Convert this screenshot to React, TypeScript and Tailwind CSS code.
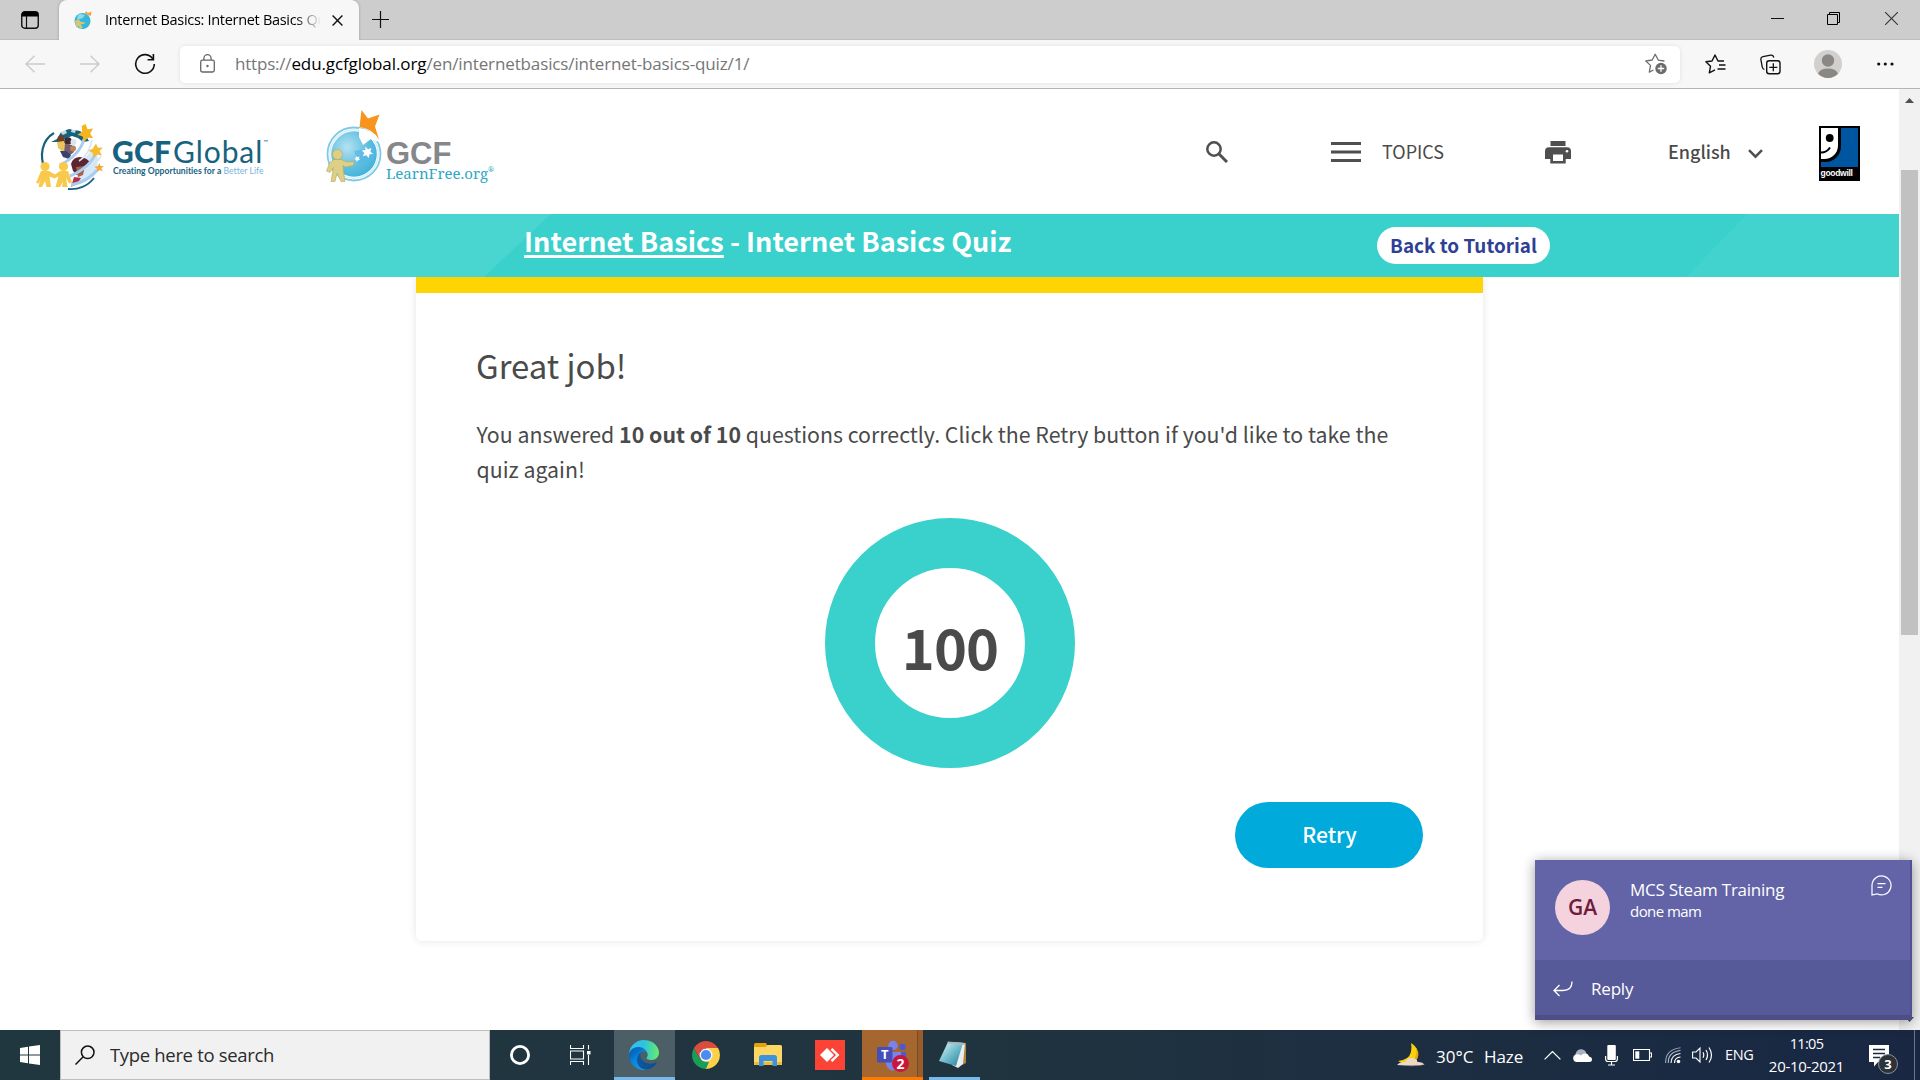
import type { ReactNode } from 'react';

const UI = "font-['Open_Sans','Noto_Sans',sans-serif]";
const PAGE = "font-['Noto_Sans_CJK_SC','Noto_Sans',sans-serif]";

function Icon({ w, h, className = '', children }: { w: number; h: number; className?: string; children: ReactNode }) {
  return (
    <svg width={w} height={h} viewBox={`0 0 ${w} ${h}`} fill="none" className={`block shrink-0 ${className}`}>
      {children}
    </svg>
  );
}

function TitleBar() {
  return (
    <div className="flex h-10 shrink-0 items-start border-b border-[#bdbdbd] bg-[#cdcdcd]">
      <Icon w={18} h={18} className="mt-[11px] ml-[21px]">
        <rect x="0.75" y="0.75" width="16.5" height="16.5" rx="3" stroke="#111" strokeWidth="1.4" />
        <path d="M0.8 5.5V3.5A2.7 2.7 0 0 1 3.5.8h11a2.7 2.7 0 0 1 2.7 2.7v2z" fill="#000" />
        <path d="M5.5 5v12" stroke="#111" strokeWidth="1.2" />
      </Icon>
      <div className="ml-[20px] flex h-10 w-[300px] shrink-0 items-start rounded-t-lg bg-[#f7f7f7] shadow-[0_0_3px_rgba(0,0,0,0.25)] [clip-path:inset(-3px_-3px_0px_-3px)]">
        <Icon w={20} h={20} className="mt-[10px] ml-[14px]">
          <circle cx="9.500" cy="11" r="8" fill="#38b7d8" />
          <path d="M5 4.800q4-2 7 .8l-3 3-5 1z" fill="#8ed9ea" />
          <path d="M12 3.500 13 1l2 2 3.500-1.400-.8 4.400z" fill="#f7a03c" />
          <path d="m2 11 4-2 1 2.500 5 1-1 1.800-3-.5L9.500 18 7 18.500 5.500 16 3 17.500z" fill="#d3c77a" />
        </Icon>
        <div className={`${UI} ml-[12px] h-[39px] w-[216px] overflow-hidden text-[14.5px] leading-[39px] tracking-[-0.3px] whitespace-nowrap text-black [mask-image:linear-gradient(to_right,#000_88%,transparent_100%)]`}>
          Internet Basics: Internet Basics Quiz
        </div>
        <Icon w={11} h={11} className="mt-[15px] ml-[11px]">
          <path d="m.6.6 9.800 9.800M10.400.6.6 10.400" stroke="#111" strokeWidth="1.400" />
        </Icon>
      </div>
      <Icon w={17} h={17} className="mt-[11px] ml-[13px]">
        <path d="M8.500 0v17M0 8.500h17" stroke="#111" strokeWidth="1.200" />
      </Icon>
      <div className="mt-3 mr-[22px] ml-auto flex">
        <Icon w={13} h={13}>
          <path d="M0 6.500h13" stroke="#111" />
        </Icon>
        <Icon w={13} h={13} className="ml-[43px]">
          <path d="M.5 2.500h10v10H.5zM2.500 2.500v-2h10v10h-2" stroke="#000" />
        </Icon>
        <Icon w={13} h={13} className="ml-[45px]">
          <path d="m0 0 13 13M13 0 0 13" stroke="#333" strokeWidth="1.100" />
        </Icon>
      </div>
    </div>
  );
}

function Toolbar() {
  return (
    <div className="flex h-[49px] shrink-0 items-center border-b border-[#b5b5b5] bg-[#f7f7f7]">
      <Icon w={20} h={18} className="ml-[25px]">
        <path d="M20 9H1M9.500.8 1 9l8.500 8.200" stroke="#cbcbcb" strokeWidth="1.400" />
      </Icon>
      <Icon w={20} h={18} className="ml-[35px]">
        <path d="M0 9h19M10.500.8 19 9l-8.500 8.200" stroke="#cbcbcb" strokeWidth="1.400" />
      </Icon>
      <Icon w={22} h={22} className="ml-[34px]">
        <path d="M19 6.200A9.300 9.300 0 1 0 20.300 11" stroke="#111" strokeWidth="1.600" />
        <path d="M19.400 1v5.800h-5.800" stroke="#111" strokeWidth="1.600" />
      </Icon>
      <div className="ml-[24px] flex h-[37px] w-[1500px] shrink-0 items-center rounded-[5px] bg-white shadow-[0_0_4px_rgba(0,0,0,0.1)]">
        <Icon w={15} h={19} className="mb-[2px] ml-5">
          <rect x=".7" y="6.200" width="13.600" height="11.800" rx="1.800" stroke="#666" strokeWidth="1.300" />
          <path d="M3.900 6V4.200a3.600 3.600 0 0 1 7.200 0V6" stroke="#666" strokeWidth="1.300" />
          <circle cx="7.500" cy="12" r="1.200" fill="#666" />
        </Icon>
        <div className={`${UI} mb-[2px] ml-[20px] text-[17px] leading-[35px] whitespace-nowrap text-[#767676]`}>
          <span className="tracking-[-0.2px]">https://</span>
          <span className="tracking-[-0.1px] text-black">edu.gcfglobal.org</span>
          <span className="tracking-[-0.13px]">/en/internetbasics/internet-basics-quiz/1/</span>
        </div>
        <Icon w={23} h={22} className="mr-[12px] ml-auto">
          <path d="M19.500 8.300 19 8l-5.600-.8L10.200 1.200 7.200 7 .8 8l4.700 4.400-1.200 6.800L8.500 17" stroke="#6e6e6e" strokeWidth="1.300" strokeLinejoin="round" />
          <circle cx="16" cy="15.500" r="5.700" fill="#6b6b6b" />
          <path d="M16 12.300v6.400M12.800 15.500h6.400" stroke="#fff" strokeWidth="1.300" />
        </Icon>
      </div>
      <Icon w={21} h={21} className="ml-[25px]">
        <path d="M19 7h-6L10 1 7 7 .9 7.700l4.600 4.600L4.300 18.900l5.700-3" stroke="#111" strokeWidth="1.400" strokeLinejoin="round" />
        <path d="M14 11h6.500M12.500 15h8" stroke="#111" strokeWidth="1.300" />
      </Icon>
      <Icon w={21} h={21} className="ml-[34px]">
        <path d="M4.400 15.500C3 15 2.500 14 2.200 12.800L.9 5.700C.6 4 1.500 2.900 3 2.600l7.600-1.400c1.500-.3 2.800.4 3.200 2.300" stroke="#111" strokeWidth="1.300" />
        <rect x="6.700" y="6.700" width="13.300" height="13" rx="2.500" stroke="#111" strokeWidth="1.400" />
        <path d="M13.300 9.300v8M9.300 13.300h8" stroke="#111" strokeWidth="1.300" />
      </Icon>
      <Icon w={28} h={28} className="ml-[33px]">
        <circle cx="14" cy="14" r="14" fill="#d2d0ce" />
        <circle cx="14" cy="10.500" r="6.200" fill="#8a8784" />
        <path d="M4 23.800a10.300 7 0 0 1 20 0A14 14 0 0 1 4 23.800z" fill="#8a8784" />
      </Icon>
      <Icon w={17} h={4} className="ml-[35px]">
        <circle cx="1.700" cy="2" r="1.600" fill="#111" />
        <circle cx="8.300" cy="2" r="1.600" fill="#111" />
        <circle cx="15" cy="2" r="1.600" fill="#111" />
      </Icon>
    </div>
  );
}

function GlobalLogo() {
  return (
    <div className="flex h-full w-[232px] shrink-0 pl-9">
      <Icon w={68} h={66} className="mt-[36px] [overflow:visible]">
        <path d="M18 8C6 15 3 30 9 45" stroke="#17627f" strokeWidth="2.200" />
        <path d="M32 64c10 1 20-3 26-11" stroke="#17627f" strokeWidth="1.800" />
        <path d="m15 17 6-3 4-7 8-3 11 2 6 5 3 5-6 1-5-4-6-2-8 3-5 3z" fill="#17627f" />
        <path d="m24 7 5-3 2 4-4 2zM36 3l4 1-1 4-4-1z" fill="#fff" opacity=".75" />
        <path d="M58 22q9 16-3 30l-9 5-10 3q10-14 12-26z" fill="#9cc5ea" opacity=".4" />
        <circle cx="25" cy="14" r="3.500" fill="#6f3d22" />
        <path d="m21 17 7-1 3 7-4 4-5-4z" fill="#e9c35c" />
        <circle cx="32" cy="16" r="3.800" fill="#3a2a32" />
        <path d="m29 19 7 1 2 7-5 4-5-3z" fill="#745d6f" />
        <circle cx="37.500" cy="17" r="3" fill="#dfe3ea" />
        <circle cx="37" cy="23.500" r="3" fill="#b98461" />
        <path d="m24 26 6 0 5 4-2 4-6-2z" fill="#39436b" />
        <path d="M35 39q2-7 9-7 8 1 10 6l-5 3-2 6-6 3-4-4z" fill="#5d2431" />
        <path d="m40 42 9-1-2 9-5 2z" fill="#a6624b" />
        <path d="m38 52 7 1-4 6-6 3z" fill="#b92c45" />
        <path d="M48 14Q44 30 24 40M61 26Q54 43 34 51M63 43Q52 57 35 60" stroke="#a9ccf0" strokeWidth="3" />
        <path d="M56 15Q53 30 43 36M65 31Q58 42 50 46" stroke="#d5e6f8" strokeWidth="1.600" />
        <path d="m49.500-1 2 5.200 5.600-.6-3 4.800 3 4.700-5.500-.4-3.600 4.400-1.300-5.600-5.300-1.700 4.800-3-.5-5.700z" fill="#f5b51e" />
        <path d="m60 18.500 1.800 4.200 5-.3-3.200 3.700 2.200 4.500-4.700-1.200-3.900 3.400-.4-5-4.600-2 4.500-2z" fill="#f6bb2f" />
        <path d="m63.500 38 1 2.900 3.300.1-2.400 2.200 1.200 3.300-3-1.500-2.600 2.100.2-3.500-3-1.600 3.500-.9z" fill="#f3a93b" />
        <circle cx="9" cy="41.500" r="4.600" fill="#f8c94b" />
        <circle cx="27.500" cy="41.500" r="4.600" fill="#f8c94b" />
        <path d="M5 46h8l6 3.500 5-3.500h8l4 11.500-3 1-3-6 1.500 9.500h-5.500L27 56.500l-3 5.500h-4.500l3-10.500-4 2-5-2L15 62h-4.500L9 56l-3 6H2.500L5 52 3 58.500 0 58z" fill="#f8c94b" />
      </Icon>
      <div className="ml-[8px] pt-[47px] whitespace-nowrap text-[#17627f] font-['Lato',sans-serif]">
        <div className="flex h-[30px] items-start text-[30px] leading-[30px]">
          <span className="font-black tracking-[0.2px]">GCF</span>
          <span className="ml-[2px] tracking-[0.9px]">Global</span>
          <span className="text-[6px] leading-[12px]">™</span>
        </div>
        <div className="pl-px text-[8.6px] leading-[11px] tracking-[0.03px]">
          <span className="font-bold">Creating Opportunities for a </span>
          <span className="text-[#79b3e0]">Better Life</span>
        </div>
      </div>
    </div>
  );
}

function LearnFreeLogo() {
  return (
    <div className="ml-[94px] flex h-full shrink-0">
      <Icon w={58} h={76} className="mt-[20px]">
        <defs>
          <radialGradient id="globe" cx="35%" cy="35%" r="75%">
            <stop offset="0" stopColor="#b5e1f2" />
            <stop offset="0.600" stopColor="#5fbfe0" />
            <stop offset="1" stopColor="#3fb0d8" />
          </radialGradient>
        </defs>
        <circle cx="28" cy="45" r="26.500" stroke="#7ccae7" strokeWidth="1.800" />
        <circle cx="28" cy="45" r="22.800" fill="url(#globe)" />
        <circle cx="28" cy="45" r="24.200" stroke="#cdebf6" strokeWidth="1.200" />
        <path d="M33 19q13 1 20 14l-8-3-8 6-4-8z" fill="#fff" />
        <path d="M28 42 50 38l-3 13-14 4z" fill="#57b8e6" opacity=".7" />
        <path d="m35.500 1 6.500 8.500 11.500-4-4.500 12 4 13Q47 20 33.500 18z" fill="#f7941e" />
        <path d="m39.500 37.500 2.400 2.700 3.500-1.300-1 3.800 2.800 2.200-3.700.4-.8 3.600-2.500-2.600-3.500.9 1.600-3.300-2.500-2.500 3.500-.4zM30 47l1.500 1.200 2-.6-.7 2 1.200 1.500-2 .1-1.200 1.500-.7-2-1.800-.6 1.500-1.100z" fill="#fff" />
        <circle cx="11.500" cy="45.500" r="5" fill="#ddcf86" stroke="#b5a75e" strokeWidth=".6" />
        <path d="M8 50.500h7l6 2.500 7-.5-.5 4-8 1.500-2.500-1.500.5 6 1.500 10h-4l-4-8-2 8H5l2.500-14-3.500 5L.5 62l3-8z" fill="#ddcf86" stroke="#b5a75e" strokeWidth=".6" />
      </Icon>
      <div className="ml-[2px] pt-[51px] whitespace-nowrap">
        <div className="h-[27px] text-[31px] leading-[27px] font-bold text-[#85878a] font-['Liberation_Sans',sans-serif]">GCF</div>
        <div className="flex h-[12px] text-[15px] leading-[12px] text-[#31a7c6] font-['Noto_Serif','DejaVu_Serif',serif]">
          <span>LearnFree.org</span>
          <span className="text-[7px] leading-[6px]">®</span>
        </div>
      </div>
    </div>
  );
}

function SiteHeader() {
  return (
    <div className={`${PAGE} flex h-[125px] shrink-0 items-center bg-white text-[#4a4a4a]`}>
      <GlobalLogo />
      <LearnFreeLogo />
      <div className="mr-[39px] ml-auto flex items-center text-[18px] leading-6">
        <Icon w={22} h={22}>
          <circle cx="8" cy="8" r="6.700" stroke="#4f4f4f" strokeWidth="2.500" />
          <path d="m13 13 8 8" stroke="#4f4f4f" strokeWidth="3" />
        </Icon>
        <Icon w={30} h={20} className="ml-[103px]">
          <path d="M0 1.500h30M0 10h30M0 18.500h30" stroke="#4f4f4f" strokeWidth="2.900" />
        </Icon>
        <span className="mb-px ml-[21px] w-[62px]">TOPICS</span>
        <Icon w={26} h={23} className="mt-[2px] ml-[101px]">
          <path d="M5.500 0h15v5h-15zM4 6.300h18a4 4 0 0 1 4 4V18h-5.300v4.500H5.300V18H0v-7.700a4 4 0 0 1 4-4z" fill="#4f4f4f" />
          <path d="M8 13.500h10V20H8z" fill="#fff" />
          <circle cx="22" cy="10.300" r="1.300" fill="#fff" />
        </Icon>
        <span className="mb-px ml-[97px] w-[63px] font-medium">English</span>
        <Icon w={15} h={10} className="mt-[5px] ml-[17px]">
          <path d="m1 1.200 6.500 6.500L14 1.200" stroke="#4f4f4f" strokeWidth="2.400" />
        </Icon>
        <div className="mt-[3px] ml-[56px] flex h-[55px] w-[41px] flex-col bg-black p-[2px] pb-0">
          <Icon w={37} h={39}>
            <path d="M0 0h37v39H0z" fill="#0055a0" />
            <path d="M0 0h20v18A15.500 15.500 0 0 1 4.500 34H0z" fill="#000" />
            <path d="M0 0h17v17.500A13.500 13.500 0 0 1 3.500 31H0z" fill="#fff" />
            <circle cx="8.700" cy="10" r="3.900" fill="#000" />
            <path d="M0 24.500q6 0 9-5" stroke="#000" strokeWidth="2" />
          </Icon>
          <span className="-ml-[0.5px] text-[8.500px] leading-[12px] font-bold tracking-[-0.300px] text-white font-['Liberation_Sans',sans-serif]">goodwill</span>
        </div>
      </div>
    </div>
  );
}

function Banner() {
  return (
    <div className={`${PAGE} relative flex h-[63px] shrink-0 items-start bg-[#3ad0cb]`}>
      <div className="absolute inset-y-0 left-0 w-[551px] bg-[#49d5d0] [clip-path:polygon(0_0,100%_0,484px_100%,0_100%)]" />
      <div className="absolute inset-y-0 right-0 w-[213px] bg-[#42d3cf] [clip-path:polygon(61px_0,100%_0,100%_100%,0_100%)]" />
      <h1 className="relative ml-[524px] w-[490px] pt-px text-[27.1px] leading-[52px] font-bold whitespace-nowrap text-white">
        <span className="tracking-[0.06px] underline decoration-[2.500px] underline-offset-[3px]">Internet Basics</span> - Internet Basics Quiz
      </h1>
      <button className="relative mt-[13px] ml-[363px] h-[37px] w-[173px] rounded-full bg-white pb-px text-center text-[18.900px] leading-9 font-bold whitespace-nowrap text-[#2e3f95]">
        Back to Tutorial
      </button>
    </div>
  );
}

function QuizCard() {
  return (
    <div className={`${PAGE} ml-[416px] flex h-[664px] w-[1067px] flex-col rounded-b-[6px] border-t-[16px] border-[#ffd404] bg-white px-[60px] pt-[52px] text-[#4a4a4a] shadow-[0_0_9px_rgba(0,0,0,0.11)]`}>
      <h2 className="text-[32.900px] leading-10">Great job!</h2>
      <p className="mt-[31px] pl-[0.5px] text-[21.320px] leading-[35px] whitespace-nowrap">
        You answered <b className="font-bold">10 out of 10</b> questions correctly. Click the Retry button if you'd like to take the
        <br />
        quiz again!
      </p>
      <div className="mt-8 ml-[349px] flex size-[250px] items-center justify-center rounded-full border-[50px] border-[#3ad0cb]">
        <span className="pt-[5px] text-[56px] leading-[60px] font-bold tracking-[-0.9px]">100</span>
      </div>
      <button className="mt-[34px] h-[66px] w-[188px] self-end rounded-full bg-[#00abdb] pb-[3px] pl-px text-center text-[21.200px] leading-8 font-medium text-white">
        Retry
      </button>
    </div>
  );
}

function Scrollbar() {
  return (
    <div className="flex w-[21px] shrink-0 flex-col items-center bg-[#f1f1f1]">
      <Icon w={9} h={5} className="mt-[9px]">
        <path d="M0 5 4.500 0 9 5z" fill="#505050" />
      </Icon>
      <div className="mt-[67px] h-[465px] w-[17px] bg-[#c1c1c1]" />
      <Icon w={9} h={5} className="mt-auto mb-[8px]">
        <path d="M0 0h9L4.500 5z" fill="#505050" />
      </Icon>
    </div>
  );
}

function Toast() {
  return (
    <div className={`${UI} absolute top-[860px] left-[1535px] flex h-[160px] w-[377px] flex-col border-r-2 border-b-[5px] border-r-[#515390] border-b-[#4c4e84] bg-[#6264a7] text-white shadow-[0_2px_12px_rgba(0,0,0,0.4)]`}>
      <div className="flex h-[100px] items-start">
        <div className="mt-5 ml-5 flex size-[55px] items-center justify-center rounded-full bg-[#f4d3de] text-[21px] leading-none font-semibold text-[#6e1c3c]">
          GA
        </div>
        <div className="mt-[19px] ml-5 whitespace-nowrap">
          <div className="text-[17px] leading-[22px] tracking-[-0.25px]">MCS Steam Training</div>
          <div className="text-[15px] leading-[20px] tracking-[-0.55px]">done mam</div>
        </div>
        <Icon w={21} h={21} className="mt-[15px] mr-[18px] ml-auto">
          <path d="M1 20V10.500a9.500 9.500 0 1 1 5 8.300L1 20z" stroke="#fff" strokeWidth="1.200" />
          <path d="M6.500 8.700h8M6.500 12.300h5" stroke="#fff" strokeWidth="1.300" />
        </Icon>
      </div>
      <div className="flex h-[55px] items-center bg-[#575a98]">
        <Icon w={20} h={16} className="mt-[3px] ml-[18px]">
          <path d="M19 .5q0 9-9 9H1M6.500 4 1 9.500 6.500 15" stroke="#fff" strokeWidth="1.300" />
        </Icon>
        <span className="mt-[2px] ml-[18px] text-[17px] leading-[22px] tracking-[-0.2px]">Reply</span>
      </div>
    </div>
  );
}

function TaskbarApps() {
  return (
    <div className="flex h-full items-center">
      <Icon w={20} h={20} className="ml-[20px]">
        <path d="M10 0a10 10 0 1 0 0 20 10 10 0 0 0 0-20zm0 2.800a7.200 7.200 0 1 1 0 14.400 7.200 7.200 0 0 1 0-14.400z" fill="#fff" />
      </Icon>
      <Icon w={21} h={20} className="ml-[40px]">
        <path d="M.5 0v3.500h13V0M.5 20v-3.500h13V20M.5 6h13v8H.5zM18.500 0v4.500M18.500 10v10" stroke="#fff" strokeWidth="1.100" />
        <path d="M17 6h3.500v3.500H17z" fill="#fff" />
      </Icon>
      <div className="ml-[23px] flex h-[50px] w-[61px] items-center justify-center border-b-[3px] border-[#76b9ed] bg-[#4d5f66] pt-[3px] pr-[2px]">
        <svg width="30" height="30" viewBox="0 0 256 256" className="block">
          <defs>
            <linearGradient id="e1" x1="63" y1="177" x2="241" y2="177" gradientUnits="userSpaceOnUse">
              <stop offset="0" stopColor="#0c59a4" />
              <stop offset="1" stopColor="#114a8b" />
            </linearGradient>
            <linearGradient id="e2" x1="157" y1="221" x2="46" y2="100" gradientUnits="userSpaceOnUse">
              <stop offset="0" stopColor="#1b9de2" />
              <stop offset="0.700" stopColor="#0883d9" />
              <stop offset="1" stopColor="#0668bf" />
            </linearGradient>
            <linearGradient id="e3" x1="10" y1="80" x2="250" y2="110" gradientUnits="userSpaceOnUse">
              <stop offset="0" stopColor="#35c1f1" />
              <stop offset="0.450" stopColor="#2cc2df" />
              <stop offset="1" stopColor="#66eb6e" />
            </linearGradient>
          </defs>
          <path d="M231 190.500a93.700 93.700 0 0 1-10.500 4.700 101.900 101.900 0 0 1-35.900 6.500c-47.300 0-88.500-32.500-88.500-74.300a31.500 31.500 0 0 1 16.400-27.300c-42.800 1.800-53.800 46.400-53.800 72.500 0 73.900 68.100 81.400 82.800 81.400 7.900 0 19.800-2.300 27-4.600l1.300-.4a128.300 128.300 0 0 0 66.600-52.800 4 4 0 0 0-5.400-5.700z" fill="url(#e1)" />
          <path d="M105.700 241.400a79.200 79.200 0 0 1-22.700-21.300 80.700 80.700 0 0 1 29.500-120c3.200-1.500 8.500-4.100 15.600-4a32.400 32.400 0 0 1 25.700 13 31.900 31.900 0 0 1 6.300 18.700c0-.2 24.500-79.600-80-79.600-43.900 0-80 41.700-80 78.200a130.200 130.200 0 0 0 12.100 56 128 128 0 0 0 156.400 67 75.500 75.500 0 0 1-62.800-8z" fill="url(#e2)" />
          <path d="M152.300 148.900c-.8 1-3.300 2.500-3.300 5.700 0 2.600 1.700 5.200 4.700 7.300 14.400 10 41.500 8.600 41.600 8.600a59.600 59.600 0 0 0 30.300-8.300 61.400 61.400 0 0 0 30.400-52.900c.3-22.400-8-37.300-11.300-43.900C223.500 23.900 177.700 0 128 0A128 128 0 0 0 0 126.200c.5-36.500 36.800-66 80-66 3.500 0 23.500.3 42 10a72.600 72.600 0 0 1 30.900 29.300c6.100 10.600 7.200 24.100 7.200 29.500s-2.700 13.300-7.800 19.900z" fill="url(#e3)" />
        </svg>
      </div>
      <svg width="28" height="28" viewBox="0 0 28 28" className="ml-[17px] block">
        <path d="M14 14 26.100 7A14 14 0 0 1 14 28z" fill="#fdd04a" />
        <path d="M14 7h12.100L20 17.500z" fill="#fdd04a" />
        <path d="m20 17.500-6 10.500-6-10.500z" fill="#fdd04a" />
        <path d="M1.900 7 8 17.500q2 3 6 3.300h3L14 28A14 14 0 0 1 1.900 7z" fill="#1a9d58" />
        <path d="M1.900 7 8 17.500V10l6-3h12.100A14 14 0 0 0 1.900 7z" fill="#dd4b3e" />
        <circle cx="14" cy="14" r="6.500" fill="#f3f3f3" />
        <circle cx="14" cy="14" r="5.100" fill="#4c8bf5" />
      </svg>
      <Icon w={28} h={24} className="ml-[34px]">
        <path d="M0 1.500Q0 0 1.500 0H12l2 4H0z" fill="#e2a30b" />
        <path d="M0 4h11.500l2-2H26.500Q28 2 28 3.500V20H0z" fill="#fdd663" />
        <path d="M0 19h28v3H0z" fill="#efb83f" />
        <path d="M5 23V14.500Q5 12 7.500 12h13Q23 12 23 14.500V23h-4.500v-5h-9v5z" fill="#3a94dd" />
      </Icon>
      <div className="ml-[33px] flex size-[30px] items-center justify-center bg-[#fb4436]">
        <Icon w={20} h={14}>
          <path d="m7 0 7 7-7 7-7-7z" fill="#fff" />
          <path d="m11.500.8 6.200 6.200-6.200 6.200" stroke="#fff" strokeWidth="2.400" />
        </Icon>
      </div>
      <div className="ml-[17px] flex h-[50px] w-[61px] border-b-[3px] border-[#ff7800] bg-[#a66630]">
        <div className="relative flex w-14 border-r border-[#7d4a20] pt-[10px] pl-[15px]">
          <Icon w={34} h={34}>
            <circle cx="16" cy="5.500" r="4.700" fill="#7b83eb" />
            <circle cx="25.500" cy="7" r="3.300" fill="#5059c9" />
            <path d="M8 12h16v10a7.500 7.500 0 0 1-15 2z" fill="#7b83eb" />
            <path d="M24 12h5v8a5 5 0 0 1-5 4z" fill="#5059c9" />
            <rect x="0" y="7" width="15.500" height="15.500" rx="1.500" fill="#464eb8" />
          </Icon>
          <span className={`${UI} absolute top-[17px] left-[19px] text-[13px] leading-[15px] font-bold text-white`}>T</span>
          <span className={`${UI} absolute top-[25px] left-[30px] flex size-[17px] items-center justify-center rounded-full bg-[#c8173c] text-[14px] leading-none font-bold text-white`}>2</span>
        </div>
        <div className="w-[5px] bg-[#985b29]" />
      </div>
      <div className="ml-[6px] flex h-[50px] w-[51px] items-start justify-center border-b-[3px] border-[#76b9ed] pt-[11px] pr-[3px]">
        <Icon w={28} h={27}>
          <defs>
            <linearGradient id="pad" x1="0" y1="0" x2="1" y2="1">
              <stop offset="0" stopColor="#eafafc" />
              <stop offset="0.500" stopColor="#72bccd" />
              <stop offset="1" stopColor="#227a92" />
            </linearGradient>
          </defs>
          <path d="M24 2h3v20l-4 2z" fill="#b1843f" />
          <path d="m10 1 16 1-2 21-5 4-6-3z" fill="#e8eeee" />
          <path d="M9 1 24 2 17 25 0 20z" fill="url(#pad)" />
          <path d="M9 .5 26 2v2L8 2.500z" fill="#a9b8bb" />
        </Icon>
      </div>
    </div>
  );
}

function Tray() {
  return (
    <div className={`${UI} ml-auto flex h-full items-center text-white`}>
      <Icon w={28} h={26}>
        <path d="M14 1q7 4 7 11.500-1 9-11 9.500-5 0-9-3 11-1 13-9 1-5 0-9z" fill="#fbd00f" />
        <path d="M16.500 3q5 5 2 11.500-3 6-10 5.500 8 2.500 12-3.500 3-7-4-13.500z" fill="#e9a90f" />
        <path d="M0 23q3-3.500 8-3 2-4.500 7-4 5 0 5.500 4 5-.5 7 2.500-6 2-27.500.5z" fill="#ead9c6" />
        <path d="M0 23q14 1.500 28-.5-10 3-28 .5z" fill="#a37a60" />
      </Icon>
      <span className="mt-[3px] ml-[11px] w-[48px] text-[17px] leading-6 whitespace-nowrap">30°C</span>
      <span className="mt-[3px] w-[41px] text-[17px] leading-6 tracking-[-0.1px]">Haze</span>
      <Icon w={17} h={9} className="ml-[19px]">
        <path d="m.6 8.400 7.900-7.800 7.900 7.800" stroke="#fff" strokeWidth="1.300" />
      </Icon>
      <Icon w={20} h={14} className="ml-[11px]">
        <path d="M3.500 7.500a5.500 5.500 0 0 1 11-1.500l2 3-12 2z" fill="#a9b2c0" />
        <path d="M4 14a4 4 0 0 1-.5-7.500q3-1 5.500 1 2-2.500 5-2Q16.500 6 17 8.500q3 .5 3 3Q20 14 17 14z" fill="#fff" />
      </Icon>
      <Icon w={13} h={21} className="ml-[13px]">
        <rect x="2.300" y="0" width="8.500" height="15" rx="1" fill="#fff" />
        <path d="M.6 11v3q0 2.500 2.500 2.500h6.800q2.500 0 2.500-2.500v-3M6.500 16.500V20M3 20h7" stroke="#fff" strokeWidth="1.200" />
      </Icon>
      <Icon w={19} h={12} className="ml-[15px]">
        <path d="M.5.5h16v11H.5zM17 4h1.500v4H17" stroke="#fff" strokeWidth="1.100" />
        <path d="M2.300 2.300h4v7.400h-4z" fill="#fff" />
      </Icon>
      <Icon w={16} h={17} className="ml-[13px]">
        <circle cx="13.500" cy="14.500" r="1.800" fill="#fff" />
        <path d="M9.500 16q0-5.500 6-6" stroke="#fff" strokeWidth="1.200" />
        <path d="M6 16Q6 7.500 15.500 6.500" stroke="#e3e6eb" strokeWidth="1.200" />
        <path d="M3.200 16Q3 5 15.500 3.500" stroke="#b5bcc8" strokeWidth="1.100" />
        <path d="M.6 16Q.2 2.500 15.500.7" stroke="#9aa4b3" strokeWidth="1.100" />
      </Icon>
      <Icon w={21} h={18} className="ml-[11px]">
        <path d="M.6 6H4l4-4v14l-4-4H.6z" stroke="#fff" strokeWidth="1.100" />
        <path d="M11 6.300q1.500 2.700 0 5.400M14 4q3 5 0 10M17 1.500q5 7.500 0 15" stroke="#fff" strokeWidth="1.200" />
      </Icon>
      <span className="ml-[12px] w-[31px] text-[14.500px] leading-5 tracking-[-0.400px]">ENG</span>
      <div className="ml-[11px] w-[80px] pr-px pb-px text-center text-[15px] leading-[23px] whitespace-nowrap">
        <div className="text-[14.500px] tracking-[-0.700px]">11:05</div>
        <div className="tracking-[-0.300px]">20-10-2021</div>
      </div>
      <div className="relative ml-[22px] h-10 w-[32px]">
        <Icon w={20} h={22} className="mt-[10px]">
          <path d="M0 0h20v17H9l-4 4.500V17H0z" fill="#fff" />
          <path d="M4 4.500h12M4 8.500h12M4 12.500h7" stroke="#1b2a40" strokeWidth="1.300" />
        </Icon>
        <span className="absolute top-[19px] left-[9px] flex size-[20px] items-center justify-center rounded-full border border-[#8a8f98] bg-[#2d3138] text-[13px] leading-none font-bold">3</span>
      </div>
      <div className="ml-[13px] h-full w-[6px] border-l border-[#6b7686]" />
    </div>
  );
}

function Taskbar() {
  return (
    <div className="flex h-[50px] shrink-0 bg-linear-to-r from-[#20373f] via-[#20343f] to-[#192743]">
      <div className="flex w-[60px] items-center justify-center">
        <Icon w={20} h={20}>
          <path d="m0 3 8-1.200v7.700H0zM9 1.600 20 0v9.500H9zM0 10.500h8v7.700L0 17zM9 10.500h11V20L9 18.400z" fill="#fff" />
        </Icon>
      </div>
      <div className="flex w-[430px] items-center border border-[#bdbdbd] bg-[#f1f1f1]">
        <Icon w={20} h={20} className="ml-[14px]">
          <circle cx="12.700" cy="7.300" r="6.300" stroke="#111" strokeWidth="1.500" />
          <path d="m8.200 11.800-7.700 7.700" stroke="#111" strokeWidth="1.500" />
        </Icon>
        <span className={`${UI} ml-[15px] text-[18.500px] leading-6 tracking-[-0.330px] text-[#2b2b2b]`}>Type here to search</span>
      </div>
      <TaskbarApps />
      <Tray />
    </div>
  );
}

export default function App() {
  return (
    <div className="relative flex h-[1080px] w-[1920px] flex-col overflow-hidden bg-white">
      <TitleBar />
      <Toolbar />
      <div className="flex min-h-0 flex-1">
        <div className="flex w-[1899px] shrink-0 flex-col bg-white">
          <SiteHeader />
          <Banner />
          <QuizCard />
        </div>
        <Scrollbar />
      </div>
      <Taskbar />
      <Toast />
    </div>
  );
}
